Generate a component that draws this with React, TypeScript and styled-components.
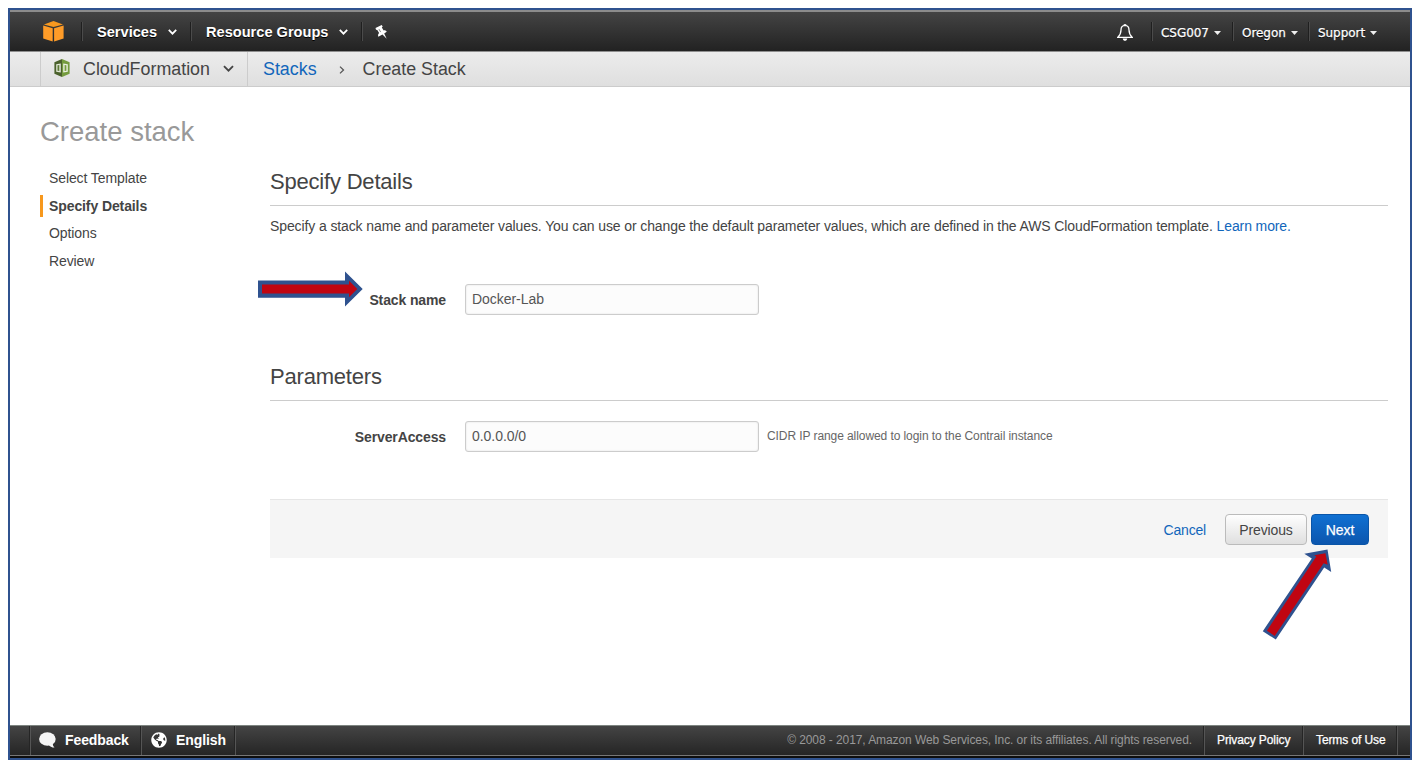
import React from "react";
import styled, { createGlobalStyle } from "styled-components";
import { FaGlobeAmericas } from "react-icons/fa";

const GlobalStyle = createGlobalStyle`
  *, *::before, *::after { box-sizing: border-box; }
  html { background: #fff; }
  body {
    margin: 0;
    padding: 8px 0 0 8px;
    font-family: "Liberation Sans", Arial, Helvetica, sans-serif;
    color: #444;
    overflow: hidden;
  }
`;

const Frame = styled.div`
  position: relative;
  display: flex;
  flex-direction: column;
  width: 1404px;
  height: 752px;
  border: 2px solid #2f528f;
  background: #fff;
`;

const TopBar = styled.header`
  display: flex;
  justify-content: space-between;
  flex: none;
  height: 42px;
  padding: 0 18px 0 33px;
  border-top: 2px solid #8c8c8c;
  border-bottom: 1px solid #8f8f8f;
  background: linear-gradient(#444, #222);
`;

const BarGroup = styled.div`
  display: flex;
  align-items: center;
`;

const Divider = styled.span<{ $h: number }>`
  flex: none;
  width: 2px;
  height: ${(p) => p.$h}px;
  border-left: 1px solid #1f1f1f;
  border-right: 1px solid #4b4b4b;
`;

const NavItem = styled.a<{ $w: number; $pad: number }>`
  display: flex;
  align-items: center;
  width: ${(p) => p.$w}px;
  padding-left: ${(p) => p.$pad}px;
  padding-top: 1px;
  font-size: 14.6px;
  font-weight: 700;
  color: #fff;
  white-space: nowrap;
  text-shadow: 0 1px 0 #000;
`;

const UserItem = styled(NavItem)`
  padding-top: 2px;
  font: 400 12px "DejaVu Sans", sans-serif;
  letter-spacing: -0.05px;
  -webkit-text-stroke: 0.25px #fff;
  svg { margin-left: 5px; }
`;

const Push = styled.span`
  display: flex;
  margin-left: auto;
  margin-right: 13px;
`;

const ServiceBar = styled.nav`
  display: flex;
  align-items: stretch;
  flex: none;
  height: 35px;
  padding-left: 30px;
  border-bottom: 1px solid #ccc;
  background: linear-gradient(#ececec, #dfdfdf);
  font-size: 17.85px;
  line-height: 34px;
  white-space: nowrap;
`;

const ServiceMenu = styled.div`
  display: flex;
  align-items: center;
  width: 208px;
  padding: 0 13px 0 13px;
  border-left: 1px solid #ccc;
  border-right: 1px solid #ccc;
  svg:first-child { margin-bottom: 2px; }
`;

const ServiceName = styled.span`
  margin: 0 auto 0 13px;
`;

const Crumbs = styled.div`
  display: flex;
  align-items: center;
  padding-left: 15px;
  svg { margin: 2px 18px 0 22px; }
`;

const Link = styled.a`
  color: #1166bb;
`;

const Body = styled.div`
  display: flex;
  flex: 1;
  padding: 0 22px 0 30px;
`;

const Sidebar = styled.aside`
  width: 230px;
  padding-top: 29px;
`;

const PageTitle = styled.h1`
  margin: 0 0 19px;
  font-size: 27.5px;
  font-weight: 400;
  line-height: 32px;
  color: #999;
`;

const Step = styled.div<{ $active?: boolean }>`
  display: flex;
  align-items: center;
  height: 22px;
  margin-bottom: ${(p) => (p.$active ? 5 : 6)}px;
  padding-left: ${(p) => (p.$active ? 6 : 9)}px;
  border-left: ${(p) => (p.$active ? "3px solid #f7981d" : "0")};
  font-size: 14px;
  letter-spacing: -0.1px;
  font-weight: ${(p) => (p.$active ? 700 : 400)};
`;

const Content = styled.main`
  flex: 1;
  padding-top: 78px;
`;

const Heading = styled.h2`
  height: 41px;
  margin: 0;
  padding-top: 4px;
  border-bottom: 1px solid #ccc;
  font-size: 22px;
  letter-spacing: -0.2px;
  font-weight: 400;
  line-height: 25px;
`;

const Intro = styled.p`
  height: 78px;
  margin: 0;
  padding-top: 11px;
  font-size: 14px;
  letter-spacing: -0.11px;
  line-height: 18px;
  white-space: nowrap;
`;

const Field = styled.div<{ $before?: number; $after: number }>`
  display: flex;
  align-items: center;
  height: 31px;
  margin-top: ${(p) => p.$before ?? 0}px;
  margin-bottom: ${(p) => p.$after}px;
`;

const Label = styled.label`
  width: 176px;
  margin-right: 19px;
  font-size: 14px;
  letter-spacing: -0.12px;
  font-weight: 700;
  text-align: right;
`;

const Input = styled.input`
  width: 294px;
  height: 31px;
  padding: 0 6px 2px;
  border: 1px solid #ccc;
  border-radius: 3px;
  outline: 0;
  background: #fcfcfc;
  box-shadow: inset 0 0 2px #ddd;
  font: 14px "Liberation Sans", Arial, sans-serif;
  letter-spacing: -0.05px;
  color: #555;
`;

const Hint = styled.span`
  margin-left: 8px;
  padding-bottom: 2px;
  font-size: 12px;
  letter-spacing: -0.08px;
  color: #666;
`;

const Actions = styled.div`
  display: flex;
  align-items: center;
  justify-content: flex-end;
  height: 59px;
  padding: 0 19px 0 0;
  border-top: 1px solid #e6e6e6;
  background: #f5f5f5;
  font-size: 14px;
  letter-spacing: -0.2px;
  ${Link} { padding-top: 2px; }
`;

const Button = styled.button<{ $primary?: boolean; $w: number }>`
  width: ${(p) => p.$w}px;
  height: 31px;
  margin-left: ${(p) => (p.$primary ? 4 : 19)}px;
  padding: 2px 0 0;
  border: 1px solid ${(p) => (p.$primary ? "#0a55a8" : "#bbb")};
  border-radius: 4px;
  background: ${(p) => (p.$primary ? "linear-gradient(#0f70d2, #0c56ae)" : "linear-gradient(#fefefe, #dfdfdf)")};
  color: ${(p) => (p.$primary ? "#fff" : "#444")};
  font: 14px "Liberation Sans", Arial, sans-serif;
  letter-spacing: -0.12px;
  -webkit-text-stroke: ${(p) => (p.$primary ? "0.25px #fff" : "0")};
`;

const Footer = styled.footer`
  display: flex;
  align-items: stretch;
  flex: none;
  height: 33px;
  border-top: 1px solid #7d8480;
  border-bottom: 2px solid #0e0e0e;
  background: linear-gradient(#444, #252525 29px, #777 29px);
  white-space: nowrap;
`;

const FooterCell = styled.div<{ $w: number; $pad: number; $size: number; $bold?: boolean; $plain?: boolean }>`
  display: flex;
  align-items: center;
  width: ${(p) => p.$w}px;
  padding-left: ${(p) => p.$pad}px;
  margin-bottom: 1px;
  padding-bottom: 1px;
  border-left: 1px solid ${(p) => (p.$plain ? "transparent" : "#555")};
  box-shadow: ${(p) => (p.$plain ? "none" : "-1px 0 0 #252525")};
  font-size: ${(p) => p.$size}px;
  letter-spacing: -0.1px;
  font-weight: ${(p) => (p.$bold ? 700 : 400)};
  color: #fff;
  -webkit-text-stroke: ${(p) => (p.$bold ? "0" : "0.25px #fff")};
  svg { margin-right: 9px; }
`;

const Copyright = styled.span`
  margin: 0 12px 0 auto;
  font-size: 12px;
  letter-spacing: -0.08px;
  line-height: 28px;
  color: #999;
`;

const Annotations = styled.svg`
  position: absolute;
  left: -10px;
  top: -10px;
  pointer-events: none;
`;

const Chevron = ({ w = 9, color = "#fff", sw = 1.8 }: { w?: number; color?: string; sw?: number }) => (
  <svg width={w} height={w * 0.67} viewBox="0 0 9 6" fill="none" stroke={color} strokeWidth={sw}>
    <path d="M0.8 0.9 4.5 4.6 8.2 0.9" />
  </svg>
);

const Caret = () => (
  <svg width="7" height="4" viewBox="0 0 7 4"><path d="M0 0h7L3.5 4z" fill="#eee" /></svg>
);

const Cube = () => (
  <svg width="21" height="21" viewBox="0 0 21 21">
    <path d="M.9 3.4 10.5.1 20 3.4 10.5 6z" fill="#f7981f" />
    <path d="M.2 4.6 9.7 7.2V20.6L.2 17.5z" fill="#ff9c28" />
    <path d="M20.6 4.6 11.1 7.2V20.6l9.5-3.1z" fill="#ff9c28" />
  </svg>
);

const Pin = () => (
  <svg width="13" height="14" viewBox="0 0 13 14" fill="#fff">
    <path d="M.5 3.1 6.700.1l1 1.500-.9 1 1.900 2.800c1.300-.3 2.400.2 3 1.400L9.200 8.500l2.500 5.200-4.200-4.200-4.200 2.200c-.5-1.400-.1-2.700.8-3.600L2.300 4.900 1 4.700z" />
    <path d="M3.900 4.100 5.700 7.100" stroke="#777" strokeWidth=".9" />
  </svg>
);

const Bell = () => (
  <svg width="16" height="17" viewBox="0 0 16 17" fill="none" stroke="#fff" strokeWidth="1.3">
    <path d="M8 1.4C5.2 1.6 4 3.5 4 6c0 3.8-1 5.2-3.1 7.3h14.2C13 11.2 12 9.8 12 6c0-2.5-1.2-4.4-4-4.6z" />
    <path d="M7.2 1.2V.3h1.6v.9" strokeWidth="1" />
    <path d="M5.7 14.5h4.6C10 16 9.1 16.8 8 16.8S6 16 5.7 14.5z" fill="#fff" stroke="none" />
  </svg>
);

const CloudFormationIcon = () => (
  <svg width="16" height="18" viewBox="0 0 16 18">
    <path d="M8 0 .4 3.200v11.500L8 18z" fill="#4b612c" />
    <path d="M8 0 15.600 3.200v11.500L8 18z" fill="#759c3e" />
    <path d="M2.200 5.300 6.800 4.400v9.200L2.200 12.700z" fill="#dfe5d4" />
    <path d="M3.500 6.200 5.300 5.900v6.200l-1.800-.3z" fill="#5d7a36" />
    <path d="M9.200 4.400l4.600.9v7.400L9.200 13.600z" fill="#e9efdf" />
    <path d="M10.600 5.900l1.800.3v5.600l-1.800.3z" fill="#759c3e" />
  </svg>
);

const Bubble = () => (
  <svg width="17" height="16" viewBox="0 0 17 16" fill="#f5f5f5">
    <ellipse cx="8.4" cy="7" rx="8.3" ry="6.8" />
    <path d="M9.5 12.5c1.5 2.2 3.2 3 6 3.100-1.500-1.400-1.700-2.600-1.600-4.400z" />
  </svg>
);

export default function App() {
  return (
    <>
      <GlobalStyle />
      <Frame>
        <TopBar>
          <BarGroup>
            <Cube />
            <NavItem as="span" $w={17} $pad={0} />
            <Divider $h={19} />
            <NavItem $w={107} $pad={14}>Services<Push><Chevron /></Push></NavItem>
            <Divider $h={19} />
            <NavItem $w={169} $pad={14}>Resource Groups<Push><Chevron /></Push></NavItem>
            <Divider $h={19} />
            <NavItem $w={40} $pad={12}><Pin /></NavItem>
          </BarGroup>
          <BarGroup>
            <NavItem $w={34} $pad={0}><Bell /></NavItem>
            <Divider $h={19} />
            <UserItem $w={79} $pad={8}>CSG007<Caret /></UserItem>
            <Divider $h={19} />
            <UserItem $w={74} $pad={8}>Oregon<Caret /></UserItem>
            <Divider $h={19} />
            <UserItem $w={82} $pad={8}>Support<Caret /></UserItem>
          </BarGroup>
        </TopBar>

        <ServiceBar>
          <ServiceMenu>
            <CloudFormationIcon />
            <ServiceName>CloudFormation</ServiceName>
            <Chevron w={11} color="#444" sw={1.5} />
          </ServiceMenu>
          <Crumbs>
            <Link>Stacks</Link>
            <svg width="6" height="8" viewBox="0 0 6 8" fill="none" stroke="#555" strokeWidth="1.3">
              <path d="M1 .6 4.5 4 1 7.4" />
            </svg>
            <span>Create Stack</span>
          </Crumbs>
        </ServiceBar>

        <Body>
          <Sidebar>
            <PageTitle>Create stack</PageTitle>
            <Step>Select Template</Step>
            <Step $active>Specify Details</Step>
            <Step>Options</Step>
            <Step>Review</Step>
          </Sidebar>
          <Content>
            <Heading>Specify Details</Heading>
            <Intro>
              Specify a stack name and parameter values. You can use or change the default parameter values, which are
              defined in the AWS CloudFormation template. <Link>Learn more.</Link>
            </Intro>
            <Field $after={45}>
              <Label>Stack name</Label>
              <Input defaultValue="Docker-Lab" />
            </Field>
            <Heading>Parameters</Heading>
            <Field $before={20} $after={47}>
              <Label>ServerAccess</Label>
              <Input defaultValue="0.0.0.0/0" />
              <Hint>CIDR IP range allowed to login to the Contrail instance</Hint>
            </Field>
            <Actions>
              <Link>Cancel</Link>
              <Button $w={82}>Previous</Button>
              <Button $w={58} $primary>Next</Button>
            </Actions>
          </Content>
        </Body>

        <Footer>
          <FooterCell $w={20} $pad={0} $size={12} $plain />
          <FooterCell $w={111} $pad={8} $size={14} $bold><Bubble />Feedback</FooterCell>
          <FooterCell $w={94} $pad={9} $size={14} $bold><FaGlobeAmericas size={16} />English</FooterCell>
          <FooterCell $w={2} $pad={0} $size={12} />
          <Copyright>© 2008 - 2017, Amazon Web Services, Inc. or its affiliates. All rights reserved.</Copyright>
          <FooterCell $w={99} $pad={12} $size={12}>Privacy Policy</FooterCell>
          <FooterCell $w={94} $pad={12} $size={12}>Terms of Use</FooterCell>
          <FooterCell $w={13} $pad={0} $size={12} />
        </Footer>

        <Annotations width="1412" height="766" viewBox="0 0 1412 766">
          <path d="M258 280.500H345V271.500L362.700 289 345 306.500V297.800H258z" fill="#2f528f" />
          <path d="M262 284.500H349V280.800L357.300 289 349 297.200V293.600H262z" fill="#c00511" />
          <path d="M1327.500 549.600 1304.300 553.700 1311.800 558.600 1262.800 631.200 1275.800 639.600 1324.200 567.600 1331.200 571.900z" fill="#2f528f" />
          <path d="M1325.400 553.300 1314.300 555.200 1316.300 556.600 1266.900 630.700 1274.700 635.900 1323.600 563.200 1327.700 564.700z" fill="#c00511" />
        </Annotations>
      </Frame>
    </>
  );
}
